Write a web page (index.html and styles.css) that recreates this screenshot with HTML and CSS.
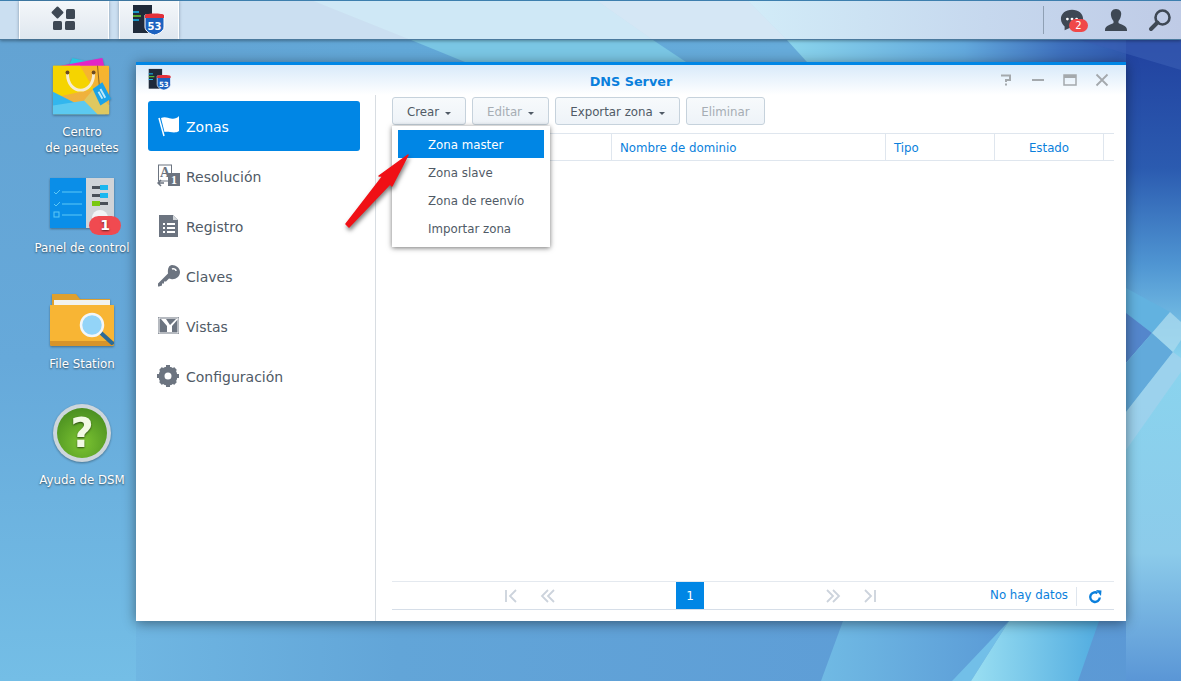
FILE: index.html
```html
<!DOCTYPE html>
<html lang="en">

<head>
    <meta charset="UTF-8">
    <title>DNS Server</title>
    <link rel="stylesheet" href="styles.css">
</head>

<body>
    <div class="desktop">
        <!-- Wallpaper, the taskbar is see-through over its top band -->
        <svg class="wallpaper" viewBox="0 0 1181 681" preserveAspectRatio="none">
            <defs>
                <linearGradient id="wall-left" x1="0" y1="0" x2="0" y2="1">
                    <stop offset="0" stop-color="#63a3d3"/>
                    <stop offset="0.5" stop-color="#66a9da"/>
                    <stop offset="1" stop-color="#74bee6"/>
                </linearGradient>
                <linearGradient id="wall-top" x1="0" y1="0" x2="1" y2="0">
                    <stop offset="0" stop-color="#63a3d3"/>
                    <stop offset="0.25" stop-color="#62a8d8"/>
                    <stop offset="1" stop-color="#6aaedc"/>
                </linearGradient>
                <linearGradient id="wall-dark" x1="0" y1="0" x2="1" y2="0">
                    <stop offset="0" stop-color="#8ad4ec"/>
                    <stop offset="0.45" stop-color="#62a8dc"/>
                    <stop offset="0.7" stop-color="#3d6fbc"/>
                    <stop offset="1" stop-color="#2445a2"/>
                </linearGradient>
                <linearGradient id="wall-bottom" x1="0" y1="0" x2="1" y2="0">
                    <stop offset="0" stop-color="#6fb6e2"/>
                    <stop offset="0.25" stop-color="#62a5d8"/>
                    <stop offset="1" stop-color="#5b98d5"/>
                </linearGradient>
                <linearGradient id="wall-right" x1="0" y1="0" x2="0" y2="1">
                    <stop offset="0" stop-color="#21419f"/>
                    <stop offset="0.2" stop-color="#2b5bb0"/>
                    <stop offset="0.35" stop-color="#4f95d2"/>
                    <stop offset="0.5" stop-color="#8ad4ee"/>
                    <stop offset="0.8" stop-color="#8ccbea"/>
                    <stop offset="1" stop-color="#5a96d6"/>
                </linearGradient>
                <linearGradient id="bar-end" x1="0" y1="0" x2="1" y2="0">
                    <stop offset="0" stop-color="#d2ecf8"/>
                    <stop offset="0.55" stop-color="#c6d8ee"/>
                    <stop offset="1" stop-color="#bfcbe6"/>
                </linearGradient>
                <linearGradient id="panel-a" x1="0" y1="0" x2="1" y2="0">
                    <stop offset="0" stop-color="#70bae4"/>
                    <stop offset="1" stop-color="#5a9ad6"/>
                </linearGradient>
                <linearGradient id="panel-b" x1="0" y1="0" x2="1" y2="0">
                    <stop offset="0" stop-color="#9adff2"/>
                    <stop offset="1" stop-color="#52ace0"/>
                </linearGradient>
                <linearGradient id="bag-shade" x1="0" y1="0" x2="0" y2="1">
                    <stop offset="0" stop-color="#f8b52a"/>
                    <stop offset="1" stop-color="#eab048"/>
                </linearGradient>
                <radialGradient id="help-green" cx="0.5" cy="0.7" r="0.7">
                    <stop offset="0" stop-color="#7cc432"/>
                    <stop offset="1" stop-color="#4a8f20"/>
                </radialGradient>
            </defs>
            <rect x="0" y="40" width="137" height="641" fill="url(#wall-left)"/>
            <rect x="136" y="40" width="1045" height="22" fill="url(#wall-top)"/>
            <polygon points="411,40 653,40 686,62 465,62" fill="#7ac6e4"/>
            <polygon points="787,40 1181,40 1181,62 807,62" fill="url(#wall-dark)"/>
            <rect x="136" y="621" width="1045" height="60" fill="url(#wall-bottom)"/>
            <rect x="1126" y="40" width="55" height="641" fill="url(#wall-right)"/>
            <polygon points="1080,40 1181,40 1181,70" fill="#3a5fb4" opacity="0.6"/>
            <polygon points="1126,288 1170,312 1152,333 1126,313" fill="#62b2e0"/>
            <polygon points="1126,313 1152,333 1126,363" fill="#5486cc"/>
            <polygon points="1152,333 1173,352 1126,412 1126,363" fill="#62aadb"/>
            <polygon points="1170,312 1181,322 1181,340 1173,352 1152,333" fill="#a8d8ee" opacity="0.8"/>
            <polygon points="1173,352 1181,358 1181,372 1126,450 1126,412" fill="#a4d2ec" opacity="0.7"/>
            <polygon points="843,621 1009,621 952,681 821,681" fill="url(#panel-a)"/>
            <polygon points="1009,621 971,681 952,681" fill="#72bfe8"/>
            <polygon points="1009,621 1099,621 1078,681 971,681" fill="url(#panel-b)"/>
            <!-- taskbar band -->
            <rect x="0" y="0" width="1181" height="40" fill="#cbdff1"/>
            <polygon points="311,0 596,0 653,40 411,40" fill="#cfe8f6"/>
            <polygon points="596,0 747,0 787,40 653,40" fill="#d5e7f5"/>
            <polygon points="747,0 1181,0 1181,40 787,40" fill="url(#bar-end)"/>
        </svg>

        <!-- Taskbar -->
        <header class="taskbar">
            <button class="task-btn task-main">
                <svg width="36" height="28" viewBox="0 0 36 28"><g fill="#3e4854"><rect x="7" y="2" width="9" height="9" transform="rotate(45 11.500 6.500)" rx="1"/><rect x="20" y="3" width="9" height="10" rx="1.500"/><rect x="7" y="15" width="9" height="9" rx="1.500"/><rect x="19" y="15" width="10" height="9" rx="1.500"/></g></svg>
            </button>
            <button class="task-btn task-app">
                <svg width="34" height="32" viewBox="0 0 34 32">
                    <rect x="1" y="1" width="19" height="28" fill="#1f2a3a"/>
                    <g stroke-width="1.500"><path d="M1 8h6" stroke="#19b7f0"/><path d="M1 12h8" stroke="#6ccf2e"/><path d="M1 16h6" stroke="#19b7f0"/></g>
                    <path d="M13 11h19v12c0 4-5 7-9.500 8C18 30 13 27 13 23z" fill="#1c62c0" stroke="#fff"/>
                    <path d="M13 11c1-2 18-2 19 0v3H13z" fill="#e2303a"/>
                    <text x="22.500" y="26" text-anchor="middle" class="shield-text">53</text>
                </svg>
            </button>
            <div class="tray">
                <span class="tray-sep"></span>
                <span class="tray-icon chat">
                    <svg width="24" height="24" viewBox="0 0 26 26"><path d="M13 2C6 2 1 6 1 12c0 3.500 2 6 4 8l0 4 6-2.500c1 .2 2 .3 2 .3 7 0 12-4 12-9.800S20 2 13 2z" fill="#3e4854"/><circle cx="8" cy="12" r="1.500" fill="#fff"/><circle cx="13" cy="12" r="1.500" fill="#fff"/><circle cx="18" cy="12" r="1.500" fill="#fff"/></svg>
                    <span class="chat-badge">2</span>
                </span>
                <svg width="24" height="24" viewBox="0 0 24 24"><path d="M12 1c-4 0-5.500 3-5 6.500.3 2.500 1.500 4.500 2.500 5.500v2C8 16.500 1 17 1 22v1h22v-1c0-5-7-5.500-8.500-7v-2c1-1 2.200-3 2.500-5.500C18 4 16 1 12 1z" fill="#3e4854"/></svg>
                <svg width="24" height="24" viewBox="0 0 24 24"><circle cx="14.500" cy="9.500" r="7" fill="none" stroke="#3e4854" stroke-width="2.600"/><path d="M9.500 14.500L3 21" stroke="#3e4854" stroke-width="4" stroke-linecap="round"/></svg>
            </div>
        </header>

        <!-- Desktop shortcuts -->
        <div class="shortcuts">
            <div class="shortcut pkg">
                <svg class="desk-icon" width="62" height="62" viewBox="0 0 64 62">
                    <polygon points="19,8 22,1 44,6 30,12" fill="#29c4e0"/>
                    <polygon points="10,9 53,1 55,10 12,13" fill="#e224c8"/>
                    <rect x="2" y="9" width="58" height="50" rx="1" fill="url(#bag-shade)"/>
                    <polygon points="2,9 30,9 44,33 2,42" fill="#f5d400"/>
                    <polygon points="2,36 48,59 2,59" fill="#32b6ee"/>
                    <polygon points="2,50 42,44 56,59 2,59" fill="#5cc9f0"/>
                    <polygon points="34,45 44,33 60,50 60,59 48,59" fill="#e0c860"/>
                    <path d="M17 17c0 23 27 23 27 0" fill="none" stroke="#f6ecd0" stroke-width="3"/>
                    <circle cx="17" cy="16" r="2" fill="#6b4a20"/>
                    <circle cx="44" cy="16" r="2" fill="#6b4a20"/>
                    <path d="M48 9l2 22" stroke="#8a6420" stroke-width="1"/>
                    <polygon points="53,26 62,43 51,50 43,33" fill="#1ba3e8"/>
                    <path d="M51 33l5 9M49 36l4 7" stroke="#bfe8fa" stroke-width="2"/>
                </svg>
                <span>Centro<br>de paquetes</span>
            </div>
            <div class="shortcut panel">
                <span class="badge-wrap">
                    <svg class="desk-icon" width="64" height="52" viewBox="0 0 64 52">
                        <rect x="0" y="0" width="36" height="50" fill="#0a8ee8"/>
                        <rect x="36" y="0" width="28" height="50" fill="#d0d4d8"/>
                        <g stroke="#5cc8f6" stroke-width="1"><path d="M12 14h20M12 26h20M12 37h20"/><path d="M4 14l2 2 4-4M4 26l2 2 4-4" fill="none"/></g>
                        <rect x="4" y="34" width="5" height="5" fill="none" stroke="#5cc8f6"/>
                        <g><rect x="42" y="8" width="16" height="3" fill="#4a5058"/><rect x="50" y="7" width="8" height="5" fill="#19b7f0"/><rect x="42" y="16" width="16" height="3" fill="#4a5058"/><rect x="50" y="15" width="8" height="5" fill="#19b7f0"/><rect x="42" y="24" width="16" height="3" fill="#4a5058"/><rect x="42" y="23" width="8" height="5" fill="#7ac810"/></g>
                        <circle cx="50" cy="40" r="8" fill="#f2f4f6"/>
                    </svg>
                    <span class="panel-badge">1</span>
                </span>
                <span>Panel de control</span>
            </div>
            <div class="shortcut files">
                <svg class="desk-icon" width="64" height="54" viewBox="0 0 64 54">
                    <path d="M2 1h24l4 5h30v14H2z" fill="#dfa02e"/>
                    <rect x="4" y="7" width="56" height="10" fill="#f2f2ee"/>
                    <path d="M0 12h64v39a2 2 0 0 1-2 2H2a2 2 0 0 1-2-2z" fill="#f8b534"/>
                    <path d="M0 48h64v3a2 2 0 0 1-2 2H2a2 2 0 0 1-2-2z" fill="#d8942a"/>
                    <path d="M51 40l11 10" stroke="#2c6a96" stroke-width="4" stroke-linecap="round"/>
                    <circle cx="42" cy="32" r="11" fill="#93d4f8" stroke="#f2f6f8" stroke-width="2.500"/>
                </svg>
                <span>File Station</span>
            </div>
            <div class="shortcut help">
                <svg class="desk-icon" width="60" height="60" viewBox="0 0 60 60">
                    <circle cx="30" cy="30" r="29" fill="#cdd6dc"/>
                    <circle cx="30" cy="30" r="25" fill="url(#help-green)"/>
                    <text x="30" y="44" text-anchor="middle" class="help-mark">?</text>
                </svg>
                <span>Ayuda de DSM</span>
            </div>
        </div>

        <!-- DNS Server window -->
        <section class="window">
            <div class="title-bar">
                <svg class="title-icon" width="24" height="23" viewBox="0 0 34 32">
                    <rect x="1" y="1" width="19" height="28" fill="#1f2a3a"/>
                    <g stroke-width="1.500"><path d="M1 8h6" stroke="#19b7f0"/><path d="M1 12h8" stroke="#6ccf2e"/><path d="M1 16h6" stroke="#19b7f0"/></g>
                    <path d="M13 11h19v12c0 4-5 7-9.500 8C18 30 13 27 13 23z" fill="#1c62c0" stroke="#fff"/>
                    <path d="M13 11c1-2 18-2 19 0v3H13z" fill="#e2303a"/>
                    <text x="22.500" y="26" text-anchor="middle" class="shield-text">53</text>
                </svg>
                <div class="title-text">DNS Server</div>
                <div class="window-controls">
                    <svg width="14" height="14" viewBox="0 0 14 14"><path d="M2 2.500h9v4.500H7v2" fill="none" stroke="#a4a9ad" stroke-width="2"/><rect x="6" y="10.500" width="2" height="2" fill="#a4a9ad"/></svg>
                    <svg width="14" height="14" viewBox="0 0 14 14"><rect x="1" y="6" width="12" height="2" fill="#a4a9ad"/></svg>
                    <svg width="14" height="14" viewBox="0 0 14 14"><rect x="1" y="2" width="12" height="10" fill="none" stroke="#a4a9ad" stroke-width="1.500"/><rect x="1" y="2" width="12" height="3" fill="#a4a9ad"/></svg>
                    <svg width="14" height="14" viewBox="0 0 14 14"><path d="M1.500 1.500l11 11M12.500 1.500l-11 11" stroke="#a4a9ad" stroke-width="1.800"/></svg>
                </div>
            </div>
            <div class="window-body">
                <nav class="sidebar">
                    <a class="nav-item active">
                        <svg width="24" height="26" viewBox="0 0 24 26"><path d="M2 5l5 18" stroke="#fff" stroke-width="1.500"/><path d="M4 5c4-2 7 0 10 .5 3 .5 6 0 8-2.500v15c-3 2-6 1.500-9 1-2-.5-4-.5-5.500 0z" fill="#fff"/></svg>
                        <span>Zonas</span>
                    </a>
                    <a class="nav-item">
                        <svg width="24" height="24" viewBox="0 0 24 24"><rect x="1.500" y="1" width="13" height="16" fill="none" stroke="#6c7480"/><text x="8" y="13" text-anchor="middle" class="glyph-a">A</text><rect x="11" y="9" width="12" height="13" fill="#6c7480"/><text x="17" y="20" text-anchor="middle" class="glyph-one">1</text><path d="M1 19h6M4 16l-3 3 3 3" fill="none" stroke="#6c7480" stroke-width="1.500"/></svg>
                        <span>Resolución</span>
                    </a>
                    <a class="nav-item">
                        <svg width="24" height="24" viewBox="0 0 24 24"><path d="M2 1h14l5 5v17H2z" fill="#6c7480"/><path d="M16 1v5h5z" fill="#d4d8dc"/><g fill="#fff"><rect x="6" y="9" width="2" height="2"/><rect x="10" y="9" width="8" height="2"/><rect x="6" y="13" width="2" height="2"/><rect x="10" y="13" width="8" height="2"/><rect x="6" y="17" width="2" height="2"/><rect x="10" y="17" width="8" height="2"/></g></svg>
                        <span>Registro</span>
                    </a>
                    <a class="nav-item">
                        <svg width="24" height="24" viewBox="0 0 24 24"><path d="M15 1c4 0 8 3 8 7 0 5-5 8-9 7l-2-.5-3 3H7v2H5v2l-3 1H1v-3l10-10c-.5-5 1-8.500 4-8.500z" fill="#6c7480"/><path d="M15 5c2-1 4 .5 4 2" fill="none" stroke="#fff" stroke-width="1.500"/></svg>
                        <span>Claves</span>
                    </a>
                    <a class="nav-item">
                        <svg width="24" height="24" viewBox="0 0 24 24"><rect x="1" y="3" width="21" height="17" fill="#6c7480"/><path d="M4 5h5l4 6 6-6h2L15 12v6h-5v-6z" fill="#fff"/><rect x="2" y="4" width="19" height="15" fill="none" stroke="#fff"/></svg>
                        <span>Vistas</span>
                    </a>
                    <a class="nav-item">
                        <svg width="24" height="24" viewBox="0 0 24 24"><circle cx="11" cy="12" r="6.500" fill="none" stroke="#6c7480" stroke-width="6"/><g stroke="#6c7480" stroke-width="4"><path d="M11 1v3M11 20v3M0 12h3M19 12h3M3.500 4.500l2 2M16.500 17.500l2 2M18.500 4.500l-2 2M5.500 17.500l-2 2"/></g></svg>
                        <span>Configuración</span>
                    </a>
                </nav>
                <main class="content">
                    <div class="toolbar">
                        <button class="tool-btn btn-crear">Crear <i class="caret"></i></button>
                        <button class="tool-btn btn-editar disabled">Editar <i class="caret"></i></button>
                        <button class="tool-btn btn-exportar">Exportar zona <i class="caret"></i></button>
                        <button class="tool-btn btn-eliminar disabled">Eliminar</button>
                    </div>
                    <div class="table-head">
                        <div class="col col-zone"></div>
                        <div class="col col-name">Nombre de dominio</div>
                        <div class="col col-type">Tipo</div>
                        <div class="col col-state">Estado</div>
                    </div>
                    <div class="table-body"></div>
                    <div class="pager">
                        <div class="pager-left">
                            <svg width="14" height="14" viewBox="0 0 14 14"><path d="M2 1v12M12 1L6 7l6 6" fill="none" stroke="#ccd3dc" stroke-width="1.800"/></svg>
                            <svg width="16" height="14" viewBox="0 0 16 14"><path d="M8 1L2 7l6 6M14 1L8 7l6 6" fill="none" stroke="#ccd3dc" stroke-width="1.800"/></svg>
                        </div>
                        <div class="page-num">1</div>
                        <div class="pager-right">
                            <svg width="16" height="14" viewBox="0 0 16 14"><path d="M2 1l6 6-6 6M8 1l6 6-6 6" fill="none" stroke="#ccd3dc" stroke-width="1.800"/></svg>
                            <svg width="14" height="14" viewBox="0 0 14 14"><path d="M2 1l6 6-6 6M12 1v12" fill="none" stroke="#ccd3dc" stroke-width="1.800"/></svg>
                        </div>
                        <div class="pager-info">No hay datos</div>
                        <div class="pager-refresh">
                            <svg width="14" height="14" viewBox="0 0 14 14"><path d="M11.800 7.500A4.800 4.800 0 1 1 9.500 3" fill="none" stroke="#0a7fdc" stroke-width="2.400"/><polygon points="8,0 13.500,0.500 13,6" fill="#0a7fdc"/></svg>
                        </div>
                    </div>
                </main>
            </div>
        </section>

        <!-- Dropdown menu -->
        <ul class="menu">
            <li class="selected">Zona master</li>
            <li>Zona slave</li>
            <li>Zona de reenvío</li>
            <li>Importar zona</li>
        </ul>

        <!-- Annotation arrow -->
        <svg class="arrow" width="70" height="80" viewBox="0 0 70 80">
            <polygon points="64,3 48,34 46,32 5,75 2,72 39,24 35,24" fill="#f01015" stroke="#f01015" stroke-width="1.500" stroke-linejoin="round"/>
        </svg>
    </div>
</body>

</html>
```
FILE: styles.css
```css
/* General Styles */
* {
    box-sizing: border-box;
}

html,
body {
    margin: 0;
    padding: 0;
    height: 100%;
    overflow: hidden;
}

body {
    font-family: "DejaVu Sans", sans-serif;
    font-size: 11.8px;
}

.desktop {
    position: relative;
    width: 1181px;
    height: 681px;
    overflow: hidden;
}

.wallpaper {
    position: absolute;
    top: 0;
    left: 0;
    width: 100%;
    height: 100%;
}

.shield-text {
    font-family: "DejaVu Sans", sans-serif;
    font-size: 10px;
    font-weight: bold;
    fill: #fff;
}

/* Taskbar */
.taskbar {
    position: relative;
    display: flex;
    align-items: stretch;
    height: 40px;
    padding-left: 19px;
    border-top: 1px solid #3d7fae;
    border-bottom: 1px solid #4b7a9e;
    box-shadow: 0 1px 3px rgba(0, 0, 0, 0.35);
}

.task-btn {
    display: flex;
    align-items: center;
    justify-content: center;
    padding: 0;
    background: linear-gradient(#f4f7fa, #dfe7ef);
    border: none;
    border-left: 1px solid #fff;
    border-right: 1px solid #fff;
    box-shadow: 0 0 3px rgba(60, 80, 100, 0.5);
}

.task-main {
    width: 90px;
    margin-right: 10px;
}

.task-app {
    width: 60px;
}

.tray {
    display: flex;
    align-items: center;
    gap: 20px;
    margin-left: auto;
    padding-right: 9px;
}

.tray-sep {
    width: 1px;
    height: 28px;
    margin-right: -4px;
    background-color: #8fa0b4;
}

.chat {
    position: relative;
    display: flex;
}

.chat-badge {
    position: absolute;
    top: 11px;
    left: 9px;
    width: 19px;
    height: 13px;
    border-radius: 7px;
    background-color: #f04848;
    color: white;
    font-size: 10px;
    line-height: 13px;
    text-align: center;
}

/* Desktop shortcuts */
.shortcuts {
    position: absolute;
    top: 56px;
    left: 0;
    width: 164px;
    display: flex;
    flex-direction: column;
    align-items: center;
}

.shortcut {
    display: flex;
    flex-direction: column;
    align-items: center;
    color: white;
    text-align: center;
    line-height: 16px;
    text-shadow: 0 1px 2px rgba(0, 0, 0, 0.6);
}

.desk-icon {
    filter: drop-shadow(0 1px 1px rgba(0, 0, 0, 0.35));
}

.pkg {
    height: 122px;
}

.pkg .desk-icon {
    margin-bottom: 6px;
}

.panel {
    height: 115px;
}

.badge-wrap {
    position: relative;
    display: flex;
    margin-bottom: 10px;
}

.panel-badge {
    position: absolute;
    right: -7px;
    bottom: -5px;
    width: 32px;
    height: 19px;
    border-radius: 10px;
    background-color: #f04a50;
    font-size: 14px;
    font-weight: bold;
    line-height: 19px;
}

.files {
    height: 110px;
}

.files .desk-icon {
    margin-bottom: 9px;
}

.help .desk-icon {
    margin-bottom: 9px;
}

.help-mark {
    font-family: "DejaVu Sans", sans-serif;
    font-size: 40px;
    font-weight: bold;
    fill: #f2fae4;
}

/* Window */
.window {
    position: absolute;
    top: 62px;
    left: 136px;
    width: 990px;
    height: 559px;
    display: flex;
    flex-direction: column;
    background-color: white;
    border-top: 3px solid #0086e5;
    box-shadow: 0 2px 12px rgba(0, 0, 0, 0.45);
}

.title-bar {
    position: relative;
    flex: none;
    height: 30px;
    background: linear-gradient(#d8eafa, #ffffff);
}

.title-icon {
    position: absolute;
    top: 3px;
    left: 12px;
}

.title-text {
    padding-top: 9px;
    color: #0a7fdc;
    font-size: 12.8px;
    font-weight: bold;
    text-align: center;
}

.window-controls {
    position: absolute;
    top: 8px;
    right: 17px;
    display: flex;
    gap: 18px;
}

.window-body {
    flex: 1;
    display: flex;
    min-height: 0;
}

/* Sidebar */
.sidebar {
    flex: none;
    width: 240px;
    padding: 6px 15px 0 12px;
    border-right: 1px solid #d8dde2;
}

.nav-item {
    display: flex;
    align-items: center;
    gap: 5px;
    height: 50px;
    padding-left: 9px;
    border-radius: 3px;
    color: #505a66;
    font-size: 14px;
}

.nav-item span {
    padding-top: 2px;
}

.nav-item.active {
    background-color: #0086e5;
    color: white;
}

.glyph-a,
.glyph-one {
    font-family: "Liberation Serif", serif;
    font-weight: bold;
}

.glyph-a {
    font-size: 14px;
    fill: #6c7480;
}

.glyph-one {
    font-size: 12px;
    fill: #fff;
}

/* Content */
.content {
    flex: 1;
    display: flex;
    flex-direction: column;
    padding: 2px 12px 11px 16px;
    min-width: 0;
}

.toolbar {
    display: flex;
    gap: 6px;
    height: 28px;
    margin-bottom: 8px;
}

.tool-btn {
    display: flex;
    align-items: center;
    justify-content: center;
    gap: 6px;
    padding: 2px 0 0;
    background: linear-gradient(#f7fafc, #eef3f8);
    border: 1px solid #c6d2dc;
    border-radius: 3px;
    color: #505a66;
    font-family: inherit;
    font-size: 11.8px;
}

.tool-btn.disabled {
    color: #a6adb4;
}

.btn-crear {
    width: 74px;
}

.btn-editar {
    width: 77px;
}

.btn-exportar {
    width: 125px;
}

.btn-eliminar {
    width: 79px;
}

.caret {
    width: 0;
    height: 0;
    margin-top: 2px;
    border-left: 3px solid transparent;
    border-right: 3px solid transparent;
    border-top: 3px solid #505a66;
}

.table-head {
    flex: none;
    display: flex;
    height: 28px;
    padding-right: 11px;
    border-top: 1px solid #dfe6ee;
    border-bottom: 1px solid #dfe6ee;
    color: #0a7fdc;
    line-height: 28px;
}

.col {
    flex: none;
    padding-left: 8px;
    border-right: 1px solid #dfe6ee;
}

.col-zone {
    width: 220px;
}

.col-name {
    width: 274px;
}

.col-type {
    width: 109px;
}

.col-state {
    width: 109px;
    padding-left: 0;
    text-align: center;
}

.table-body {
    flex: 1;
}

.pager {
    flex: none;
    display: flex;
    align-items: stretch;
    height: 29px;
    border-top: 1px solid #e4e9ef;
    border-bottom: 1px solid #d6dee8;
    color: #0a7fdc;
}

.pager-left,
.pager-right {
    display: flex;
    align-items: center;
    gap: 22px;
}

.pager-left {
    margin-left: 112px;
}

.pager-right {
    margin-left: 121px;
}

.page-num {
    width: 28px;
    margin-left: 120px;
    background-color: #0086e5;
    color: white;
    font-size: 12px;
    line-height: 28px;
    text-align: center;
}

.pager-info {
    margin-left: auto;
    padding-right: 8px;
    line-height: 27px;
}

.pager-refresh {
    display: flex;
    align-items: center;
    justify-content: center;
    width: 37px;
    margin: 5px 1px 3px 0;
    border-left: 1px solid #dfe6ee;
}

/* Dropdown menu */
.menu {
    position: absolute;
    top: 126px;
    left: 392px;
    width: 158px;
    height: 121px;
    margin: 0;
    padding: 4px 6px;
    list-style: none;
    background-color: white;
    box-shadow: 0 1px 5px rgba(0, 0, 0, 0.55);
    color: #505a66;
}

.menu li {
    height: 28px;
    padding: 1px 0 0 30px;
    line-height: 28px;
}

.menu li.selected {
    background-color: #0086e5;
    color: white;
}

/* Annotation */
.arrow {
    position: absolute;
    top: 152px;
    left: 344px;
    filter: drop-shadow(1px 3px 2px rgba(0, 0, 0, 0.5));
}
```
